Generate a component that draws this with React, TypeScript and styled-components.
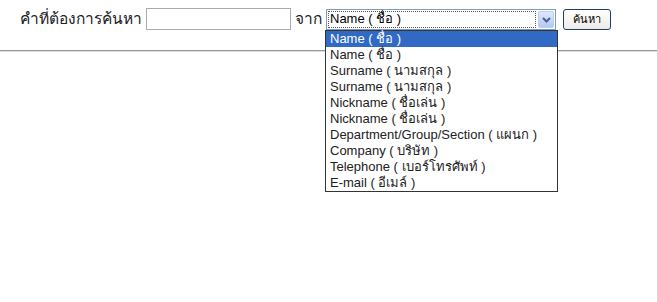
import React from 'react';
import styled, { createGlobalStyle } from 'styled-components';

const GlobalStyle = createGlobalStyle`
  body {
    margin: 0;
    background: #ffffff;
    font-family: Tahoma, "Liberation Sans", "Noto Sans", sans-serif;
  }
`;

const options = [
  'Name ( ชื่อ )',
  'Name ( ชื่อ )',
  'Surname ( นามสกุล )',
  'Surname ( นามสกุล )',
  'Nickname ( ชื่อเล่น )',
  'Nickname ( ชื่อเล่น )',
  'Department/Group/Section ( แผนก )',
  'Company ( บริษัท )',
  'Telephone ( เบอร์โทรศัพท์ )',
  'E-mail ( อีเมล์ )',
];

const App = () => (
  <Page>
    <GlobalStyle />
    <SearchBar>
      <Label>คำที่ต้องการค้นหา</Label>
      <TextBox />
      <Label>จาก</Label>
      <Combo>
        <ComboValue>
          <FocusRect>Name ( ชื่อ )</FocusRect>
        </ComboValue>
        <ArrowButton>
          <svg width="9" height="6" viewBox="0 0 9 6">
            <path d="M1 1 L4.5 4.5 L8 1" fill="none" stroke="#4d6185" strokeWidth="2" />
          </svg>
        </ArrowButton>
        <DropList>
          {options.map((o, i) => (
            <Option key={i} $selected={i === 0}>
              {o}
            </Option>
          ))}
        </DropList>
      </Combo>
      <SearchButton>ค้นหา</SearchButton>
    </SearchBar>
    <Rule />
  </Page>
);

const Page = styled.div`
  width: 657px;
  height: 302px;
`;

const SearchBar = styled.div`
  display: flex;
  align-items: center;
  padding: 8px 0 0 20px;
  height: 22px;
`;

const Label = styled.span`
  font-size: 15.5px;
  color: #222;
  line-height: 20px;
  margin-right: 4px;
`;

const TextBox = styled.div`
  width: 143px;
  height: 20px;
  border: 1px solid #a5acb5;
  margin-right: 4px;
  background: #fff;
`;

const Combo = styled.div`
  position: relative;
  display: flex;
  width: 228px;
  height: 19px;
  border: 1px solid #7f9db9;
  margin: 1px 7px 0 0;
  background: #fff;
`;

const ComboValue = styled.div`
  flex: 1;
  padding: 1px;
  display: flex;
`;

const FocusRect = styled.div`
  flex: 1;
  border: 1px dotted #555;
  font-family: "Liberation Sans", "Noto Sans", sans-serif;
  font-size: 13px;
  line-height: 14px;
  color: #000;
  padding-left: 1px;
`;

const ArrowButton = styled.div`
  width: 16px;
  margin: 1px;
  display: flex;
  align-items: center;
  justify-content: center;
  border: 1px solid #b9cdf5;
  border-radius: 2px;
  background: linear-gradient(#dfe9fd, #b4c8f6);
  box-sizing: border-box;
`;

const DropList = styled.div`
  position: absolute;
  left: -2px;
  top: 20px;
  width: 231px;
  border: 1px solid #333;
  background: #fff;
  z-index: 2;
`;

const Option = styled.div<{ $selected?: boolean }>`
  font-family: "Liberation Sans", "Noto Sans", sans-serif;
  font-size: 13px;
  line-height: 16px;
  height: 16px;
  padding-left: 4px;
  white-space: nowrap;
  color: ${p => (p.$selected ? '#fff' : '#222')};
  background: ${p => (p.$selected ? '#316ac5' : 'transparent')};
`;

const SearchButton = styled.button`
  width: 48px;
  height: 21px;
  padding: 0;
  border: 1px solid #1c3f6e;
  border-radius: 3px;
  background: linear-gradient(#ffffff, #ecebe6);
  font-family: Tahoma, "Liberation Sans", "Noto Sans", sans-serif;
  font-size: 11px;
  color: #000;
`;

const Rule = styled.hr`
  margin: 20px 0 0 0;
  border: none;
  border-top: 1px solid #999;
  border-bottom: 1px solid #ddd;
  height: 0;
`;

export default App;
